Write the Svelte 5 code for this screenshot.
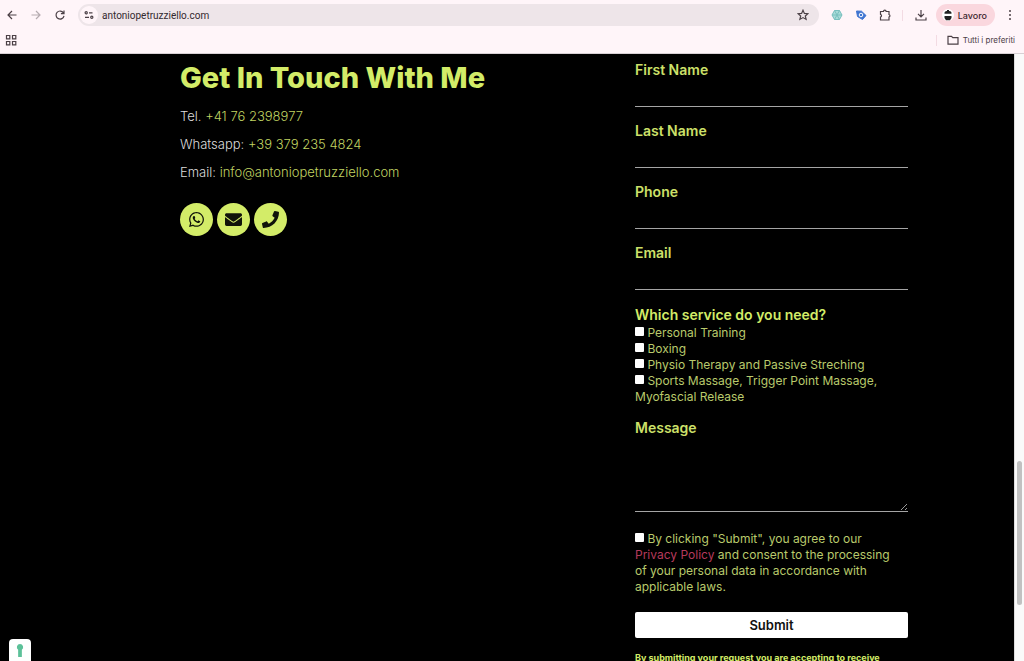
<script lang="ts">
  const fields = [
    { id: 'first-name', label: 'First Name', type: 'text' },
    { id: 'last-name', label: 'Last Name', type: 'text' },
    { id: 'phone', label: 'Phone', type: 'tel' },
    { id: 'email', label: 'Email', type: 'email' }
  ];

  const services = [
    'Personal Training',
    'Boxing',
    'Physio Therapy and Passive Streching',
    'Sports Massage, Trigger Point Massage, Myofascial Release'
  ];
</script>

<div class="window">
  <header>
    <div class="toolbar">
      <div class="nav">
        <button aria-label="Back">
          <svg viewBox="0 0 12 12"><path d="M10.5 6H2M6 2 2 6l4 4" /></svg>
        </button>
        <button class="disabled" aria-label="Forward" disabled>
          <svg viewBox="0 0 12 12"><path d="M1.5 6H10M6 2l4 4-4 4" /></svg>
        </button>
        <button aria-label="Reload">
          <svg viewBox="0 0 12 12"><path d="M9.4 3.8A4 4 0 1 0 10 6.8M10 1.5v3.1H6.9" /></svg>
        </button>
      </div>

      <div class="address">
        <button class="site-info" aria-label="Site information">
          <svg viewBox="0 0 12 12">
            <circle cx="3.2" cy="3.8" r="1.1" />
            <path d="M6 3.8h3.500M2 8.300h4" />
            <circle cx="8.800" cy="8.300" r="1.1" />
          </svg>
        </button>
        <input type="text" aria-label="Address" value="antoniopetruzziello.com" />
        <button aria-label="Bookmark this page">
          <svg viewBox="0 0 12 12"><path d="m6 1.2 1.4 3.2 3.5.3-2.6 2.3.8 3.4L6 8.6l-3.1 1.8.8-3.4L1.1 4.7l3.5-.3z" /></svg>
        </button>
      </div>

      <div class="extensions">
        <button aria-label="React extension">
          <svg viewBox="0 0 12 12" class="atom">
            <path d="M3.5 1.5h5L11 6l-2.5 4.5h-5L1 6z" />
            <path d="M1 6h10M3.5 1.5l5 9M8.5 1.5l-5 9" />
          </svg>
        </button>
        <button aria-label="Tag extension">
          <svg viewBox="0 0 12 12" class="tag">
            <path d="M1.5 2 6.5 2.2 11 6.500 7.500 10.500 2.500 7.500z" />
            <circle cx="6" cy="6" r="1.8" />
          </svg>
        </button>
        <button aria-label="Extensions">
          <svg viewBox="0 0 12 12"><path d="M1.5 2.5h3a1.3 1.3 0 0 1 2.6 0h2.9v3a1.3 1.3 0 0 1 0 2.5v3H1.5V8a1.4 1.4 0 0 0 0-2.7z" /></svg>
        </button>
      </div>
      <span class="divider"></span>
      <button aria-label="Downloads">
        <svg viewBox="0 0 12 12"><path d="M6 1v6.5M3 4.8l3 3 3-3M1 8.5V11h10V8.5" /></svg>
      </button>
      <button class="profile">
        <svg viewBox="0 0 12 12">
          <circle cx="6" cy="6" r="6" class="avatar" />
          <path d="M5 1h2v1a2.500 2.500 0 0 1 2.500 2.800h-7A2.500 2.500 0 0 1 5 2zM2.500 7h7v2L8 11.300H4L2.500 9z" class="ink" />
        </svg>
        Lavoro
      </button>
      <button aria-label="Menu">
        <svg viewBox="0 0 12 12" class="dots">
          <circle cx="6" cy="2" r="1" />
          <circle cx="6" cy="6" r="1" />
          <circle cx="6" cy="10" r="1" />
        </svg>
      </button>
    </div>

    <div class="bookmarks">
      <button aria-label="Apps">
        <svg viewBox="0 0 12 12"><path d="M1.5 1.5h3.3v3.3H1.5zM7.5 1.5h3.3v3.3H7.5zM1.5 7.5h3.3v3.3H1.5zM7.5 7.5h3.3v3.3H7.5z" /></svg>
      </button>
      <span class="divider"></span>
      <button class="folder">
        <svg viewBox="0 0 12 12"><path d="M1 2.3h3.5l1.3 1.4H11v6.5H1z" /></svg>
        Tutti i preferiti
      </button>
    </div>
  </header>

  <div class="viewport">
    <main>
      <section>
        <h1>Get In Touch With Me</h1>
        <p>Tel. <a href="tel:+41762398977">+41 76 2398977</a></p>
        <p>Whatsapp: <a href="https://wa.me/393792354824">+39 379 235 4824</a></p>
        <p>Email: <a href="mailto:info@antoniopetruzziello.com">info@antoniopetruzziello.com</a></p>
        <div class="social">
          <a href="https://wa.me/393792354824" aria-label="Whatsapp">
            <svg viewBox="0 0 448 512"><path d="M380.900 97.100C339 55.100 283.200 32 223.900 32c-122.400 0-222 99.600-222 222 0 39.100 10.200 77.300 29.600 111L0 480l117.700-30.900c32.400 17.700 68.900 27 106.100 27h.1c122.300 0 224.100-99.600 224.100-222 0-59.300-25.200-115-67.100-157zm-157 341.600c-33.200 0-65.700-8.900-94-25.700l-6.700-4-69.800 18.300L72 359.200l-4.400-7c-18.500-29.400-28.200-63.300-28.200-98.200 0-101.700 82.800-184.500 184.600-184.500 49.300 0 95.600 19.200 130.400 54.100 34.800 34.900 56.200 81.200 56.100 130.500 0 101.800-84.900 184.600-186.600 184.600zm101.200-138.200c-5.500-2.800-32.800-16.200-37.900-18-5.100-1.900-8.800-2.800-12.500 2.800-3.700 5.600-14.300 18-17.600 21.800-3.200 3.700-6.500 4.200-12 1.400-32.600-16.300-54-29.100-75.500-66-5.700-9.800 5.700-9.100 16.300-30.300 1.800-3.700.9-6.900-.5-9.700-1.400-2.800-12.500-30.100-17.100-41.200-4.500-10.800-9.100-9.300-12.500-9.500-3.200-.2-6.900-.2-10.600-.2-3.700 0-9.700 1.400-14.800 6.900-5.100 5.600-19.400 19-19.400 46.300 0 27.300 19.900 53.700 22.600 57.400 2.800 3.700 39.100 59.700 94.800 83.800 35.200 15.200 49 16.500 66.600 13.900 10.700-1.600 32.800-13.400 37.400-26.400 4.600-13 4.600-24.100 3.200-26.400-1.300-2.500-5-3.900-10.500-6.600z" /></svg>
          </a>
          <a href="mailto:info@antoniopetruzziello.com" aria-label="Email">
            <svg viewBox="0 0 512 512"><path d="M502.300 190.800c3.900-3.100 9.700-.2 9.700 4.700V400c0 26.500-21.500 48-48 48H48c-26.500 0-48-21.500-48-48V195.600c0-5 5.700-7.800 9.700-4.700 22.400 17.400 52.100 39.500 154.100 113.600 21.100 15.400 56.700 47.800 92.200 47.600 35.700.3 72-32.800 92.300-47.600 102-74.100 131.600-96.300 154-113.700zM256 320c23.200.4 56.600-29.200 73.400-41.400 132.700-96.300 142.800-104.700 173.400-128.700 5.800-4.500 9.200-11.500 9.200-18.900v-19c0-26.500-21.500-48-48-48H48c-26.500 0-48 21.500-48 48v19c0 7.400 3.400 14.300 9.200 18.900 30.600 23.900 40.700 32.400 173.400 128.700 16.800 12.200 50.200 41.800 73.400 41.400z" /></svg>
          </a>
          <a href="tel:+41762398977" aria-label="Phone">
            <svg viewBox="0 0 512 512"><path d="M493.400 24.600l-104-24c-11.300-2.600-22.900 3.300-27.500 13.900l-48 112c-4.200 9.800-1.400 21.300 6.900 28l60.600 49.600c-36 76.700-98.900 140.500-177.200 177.200l-49.600-60.600c-6.800-8.300-18.200-11.100-28-6.900l-112 48C3.900 366.500-2 378.100.6 389.400l24 104C27.100 504.200 36.700 512 48 512c256.100 0 464-207.500 464-464 0-11.200-7.700-20.900-18.600-23.400z" /></svg>
          </a>
        </div>
      </section>

      <form>
        {#each fields as field}
          <div class="field">
            <label for={field.id}>{field.label}</label>
            <input id={field.id} type={field.type} />
          </div>
        {/each}

        <fieldset>
          <legend>Which service do you need?</legend>
          {#each services as service, i}
            <div class="option">
              <input type="checkbox" id="service-{i}" />
              <label for="service-{i}">{service}</label>
            </div>
          {/each}
        </fieldset>

        <div class="field message">
          <label for="message">Message</label>
          <textarea id="message"></textarea>
        </div>

        <div class="option consent">
          <input type="checkbox" id="consent" />
          <label for="consent">
            By clicking "Submit", you agree to our<br />
            <a href="#privacy">Privacy Policy</a> and consent to the processing<br />
            of your personal data in accordance with<br />
            applicable laws.
          </label>
        </div>

        <button class="submit" type="button">Submit</button>
        <p class="note">By submitting your request you are accepting to receive</p>
      </form>
    </main>

    <div class="scrollbar"><span class="thumb"></span></div>

    <button class="privacy-badge" aria-label="Privacy preferences">
      <svg viewBox="0 0 8 14"><path d="M4 0a3.5 3.5 0 0 1 2 6.3V14H2V6.3A3.5 3.5 0 0 1 4 0z" /></svg>
    </button>
  </div>
</div>

<style>
  :global(body) {
    margin: 0;
    background: #000;
  }

  .window {
    display: flex;
    flex-direction: column;
    height: 100vh;
    font-family: Inter, sans-serif;
  }

  button {
    display: flex;
    align-items: center;
    justify-content: center;
    padding: 0;
    border: 0;
    background: none;
    color: inherit;
    font-family: inherit;
  }

  header {
    flex: none;
    background: #fff5f9;
    color: #4b4046;
    border-bottom: 1px solid #d8d0d4;
  }

  header svg {
    width: 12px;
    height: 12px;
    fill: none;
    stroke: currentColor;
    stroke-width: 1.2;
  }

  .toolbar {
    display: flex;
    align-items: center;
    height: 30px;
    padding: 0 8px 0 6px;
  }

  .nav {
    display: flex;
    gap: 12px;
    margin-right: 12px;
  }

  .disabled {
    color: #b5abb0;
  }

  .address {
    display: flex;
    flex: 1;
    align-items: center;
    height: 22px;
    padding: 0 10px 0 2px;
    border-radius: 11px;
    background: #eee5e9;
  }

  .address input {
    flex: 1;
    min-width: 0;
    padding: 0 4px;
    border: 0;
    background: none;
    color: #33292e;
    font: 10px Roboto, sans-serif;
  }

  .site-info {
    width: 18px;
    height: 18px;
    border-radius: 50%;
    background: #fff5f9;
  }

  .extensions {
    display: flex;
    gap: 12px;
    margin-left: 12px;
  }

  header .atom {
    fill: #a9dcd9;
    stroke: #79bfbe;
    stroke-width: 1;
  }

  header .tag {
    fill: #3f74d1;
    stroke: #3f74d1;
    stroke-width: 1;
  }

  .tag circle {
    stroke: #fff;
  }

  .divider {
    width: 1px;
    height: 11px;
    margin: 0 12px 0 11px;
    background: #f3dbe3;
  }

  .profile {
    gap: 4px;
    height: 22px;
    margin: 0 9px;
    padding: 0 8px 0 6px;
    border-radius: 11px;
    background: #fad7de;
    color: #40262f;
    font-size: 9px;
    font-weight: 500;
  }

  .profile .avatar {
    fill: #fff;
    stroke: none;
  }

  .profile .ink {
    fill: #222;
    stroke: none;
  }

  header .dots {
    fill: currentColor;
    stroke: none;
  }

  .bookmarks {
    display: flex;
    align-items: center;
    height: 20px;
    padding: 0 9px 3px 5px;
  }

  .bookmarks .divider {
    margin: 0 10px 0 auto;
  }

  .folder {
    gap: 4px;
    font-size: 8px;
  }

  .viewport {
    position: relative;
    display: flex;
    flex: 1;
    min-height: 0;
    overflow: hidden;
    background: #000;
    color: #d3ec68;
  }

  main {
    display: grid;
    flex: 1;
    grid-template-columns: 5fr 3fr;
    align-items: start;
    padding: 8px 106px 0 180px;
  }

  h1 {
    margin: 0 0 14px;
    font-size: 29px;
    font-weight: 800;
    line-height: 32px;
    white-space: nowrap;
  }

  section p {
    margin: 0 0 12px;
    color: #dcdcdc;
    font-size: 13px;
    font-weight: 300;
    line-height: 16px;
  }

  section a {
    color: #c0d563;
    text-decoration: none;
  }

  .social {
    display: flex;
    gap: 4px;
    margin-top: 23px;
  }

  .social a {
    display: flex;
    align-items: center;
    justify-content: center;
    width: 33px;
    height: 33px;
    border-radius: 50%;
    background: #d3ec68;
  }

  .social svg {
    width: 17px;
    height: 17px;
    fill: #10130a;
  }

  .field {
    margin-bottom: 16px;
  }

  .field label,
  legend {
    display: block;
    padding: 0;
    color: #cde069;
    font-size: 14px;
    font-weight: 600;
    line-height: 16px;
  }

  .field input,
  textarea {
    display: block;
    box-sizing: border-box;
    width: 100%;
    height: 29px;
    padding: 0;
    border: 0;
    border-bottom: 1px solid #a5a5a5;
    border-radius: 0;
    background: transparent;
    color: #fff;
    font: inherit;
  }

  textarea {
    height: 76px;
  }

  fieldset {
    min-width: 0;
    margin: 17px 0 15px;
    padding: 0;
    border: 0;
  }

  legend {
    margin-bottom: 2px;
    color: #d3ec68;
  }

  .option {
    color: #b9ca6c;
    font-size: 12px;
    font-weight: 400;
    line-height: 16px;
  }

  .option input {
    width: 9px;
    height: 9px;
    margin: 0;
    border-radius: 1px;
    background: #fff;
    vertical-align: 1px;
    appearance: none;
  }

  .message {
    margin-bottom: 19px;
  }

  .consent a {
    color: #b53a5c;
    text-decoration: none;
  }

  .submit {
    width: 100%;
    height: 26px;
    margin-top: 17px;
    border-radius: 2px;
    background: #fff;
    color: #111;
    font-size: 13px;
    font-weight: 600;
  }

  .note {
    margin: 12px 0 0;
    font-size: 9px;
    font-weight: 700;
    line-height: 16px;
    white-space: nowrap;
  }

  .scrollbar {
    display: flex;
    flex-direction: column;
    align-items: center;
    box-sizing: border-box;
    width: 10px;
    padding-top: 407px;
    border-left: 1px solid #ddd;
    background: #fafafa;
  }

  .thumb {
    width: 5px;
    height: 144px;
    border-radius: 3px;
    background: #c1c1c1;
  }

  .privacy-badge {
    position: absolute;
    bottom: 0;
    left: 9px;
    width: 22px;
    height: 22px;
    border-radius: 4px 4px 0 0;
    background: #fff;
  }

  .privacy-badge svg {
    width: 8px;
    height: 13px;
    fill: #5cc199;
  }
</style>
